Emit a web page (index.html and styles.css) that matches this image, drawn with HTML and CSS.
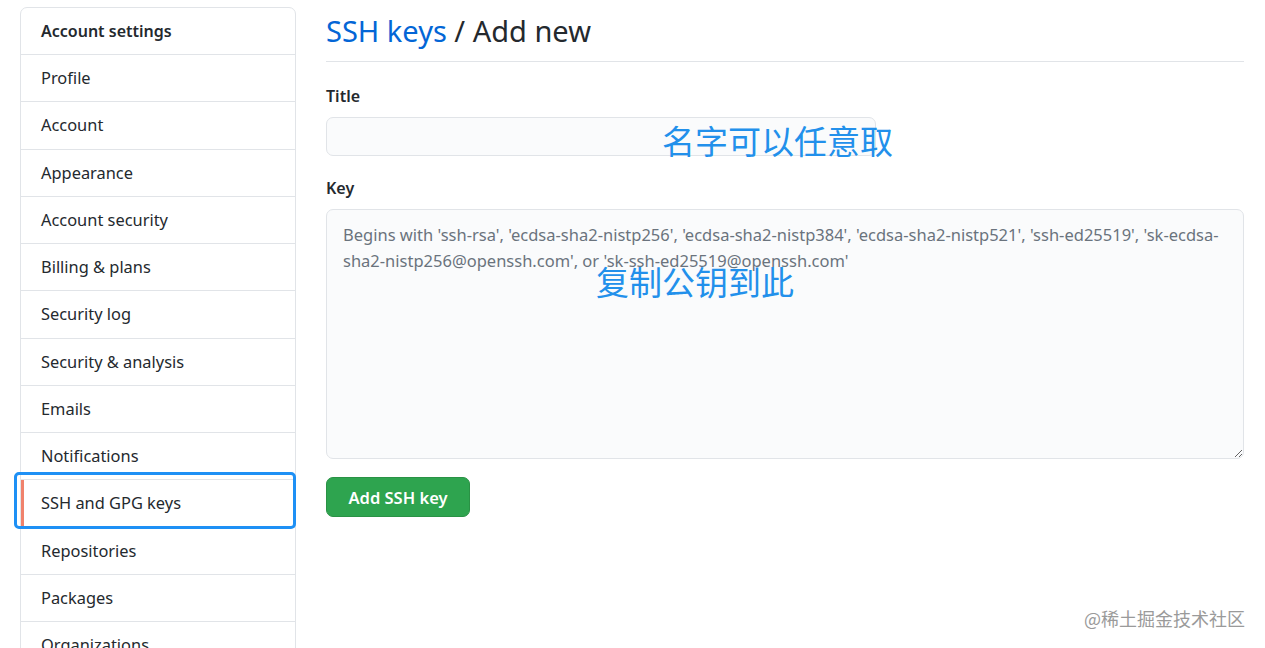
FILE: index.html
```html
<!DOCTYPE html>
<html lang="zh-CN">
<head>
<meta charset="utf-8">
<title>SSH keys / Add new</title>
<link rel="stylesheet" href="styles.css">
</head>
<body>
<div class="page">
  <nav class="menu">
    <div class="menu-heading">Account settings</div>
    <a class="menu-item">Profile</a>
    <a class="menu-item">Account</a>
    <a class="menu-item">Appearance</a>
    <a class="menu-item">Account security</a>
    <a class="menu-item">Billing &amp; plans</a>
    <a class="menu-item">Security log</a>
    <a class="menu-item">Security &amp; analysis</a>
    <a class="menu-item">Emails</a>
    <a class="menu-item">Notifications</a>
    <a class="menu-item selected">SSH and GPG keys<span class="mark-box"></span></a>
    <a class="menu-item">Repositories</a>
    <a class="menu-item">Packages</a>
    <a class="menu-item">Organizations</a>
  </nav>
  <main class="main">
    <h2 class="subhead"><a class="crumb">SSH keys</a> / Add new</h2>
    <form class="form">
      <div class="field">
        <label class="label">Title</label>
        <div class="title-wrap">
          <input class="input" type="text">
          <span class="note note-title">名字可以任意取</span>
        </div>
      </div>
      <div class="field">
        <label class="label">Key</label>
        <div class="key-wrap">
          <textarea class="textarea" placeholder="Begins with 'ssh-rsa', 'ecdsa-sha2-nistp256', 'ecdsa-sha2-nistp384', 'ecdsa-sha2-nistp521', 'ssh-ed25519', 'sk-ecdsa-sha2-nistp256@openssh.com', or 'sk-ssh-ed25519@openssh.com'"></textarea>
          <span class="note note-key">复制公钥到此</span>
        </div>
      </div>
      <button class="btn" type="button">Add SSH key</button>
    </form>
  </main>
</div>
<div class="watermark">@稀土掘金技术社区</div>
</body>
</html>
```
FILE: styles.css
```css
html, body {
  margin: 0;
  padding: 0;
  background: #ffffff;
  height: 648px;
  overflow: hidden;
}
body {
  font-family: "Noto Sans", "Open Sans", "Noto Sans CJK SC", sans-serif;
  color: #24292e;
  position: relative;
}
.page {
  display: flex;
  align-items: flex-start;
  gap: 30px;
  padding: 7px 0 0 20px;
}
.menu {
  width: 276px;
  flex: none;
  border: 1px solid #e1e4e8;
  border-radius: 7px;
  box-sizing: border-box;
  display: flex;
  flex-direction: column;
}
.menu-heading {
  height: 46px;
  line-height: 46px;
  padding-left: 20px;
  font-weight: 600;
  font-size: 16px;
  border-bottom: 1px solid #e1e4e8;
}
.menu-item {
  position: relative;
  height: 46.25px;
  line-height: 46px;
  padding-left: 20px;
  font-size: 16.4px;
  color: #24292e;
  border-bottom: 1px solid #e1e4e8;
}
.menu-item:last-child { border-bottom: none; }
.menu-item.selected {
  border-left: 3px solid #f0826c;
  padding-left: 17px;
}
.mark-box {
  position: absolute;
  left: -10px;
  top: -8px;
  width: 276px;
  height: 51px;
  border: 3px solid #1e90f5;
  border-radius: 5px;
}
.main {
  width: 918px;
  flex: none;
}
.subhead {
  margin: 0;
  font-weight: 400;
  font-size: 29px;
  line-height: 40px;
  padding: 4px 0 10px;
  border-bottom: 1px solid #e1e4e8;
  color: #24292e;
}
.crumb { color: #0366d6; }
.form {
  display: flex;
  flex-direction: column;
  align-items: flex-start;
  padding-top: 23px;
}
.field {
  display: flex;
  flex-direction: column;
  width: 100%;
  margin-bottom: 21px;
}
.field:last-of-type { margin-bottom: 18px; }
.label {
  font-weight: 600;
  font-size: 16px;
  line-height: 22px;
  margin-bottom: 10px;
}
.title-wrap, .key-wrap { position: relative; }
.input {
  display: block;
  box-sizing: border-box;
  width: 550px;
  height: 39px;
  border: 1px solid #e1e4e8;
  border-radius: 7px;
  background: #fafbfc;
  outline: none;
}
.textarea {
  display: block;
  box-sizing: border-box;
  width: 918px;
  height: 250px;
  border: 1px solid #e1e4e8;
  border-radius: 7px;
  background: #fafbfc;
  padding: 12px 8px 12px 16px;
  font-family: "Noto Sans", "Open Sans", sans-serif;
  font-size: 16.5px;
  line-height: 26px;
  outline: none;
  resize: vertical;
}
.textarea::placeholder { color: #6a737d; }
.note {
  position: absolute;
  color: #2290eb;
  font-family: "Noto Sans CJK SC", sans-serif;
  font-size: 33px;
  line-height: 1;
  white-space: nowrap;
}
.note-title { left: 336px; top: 7px; }
.note-key { left: 270px; top: 56px; font-size: 33px; }
.btn {
  height: 40px;
  width: 144px;
  border: 1px solid #2a9245;
  border-radius: 7px;
  background: #2ea44f;
  color: #ffffff;
  font-family: "Noto Sans", "Open Sans", sans-serif;
  font-weight: 600;
  font-size: 16.5px;
  padding: 0;
}
.watermark {
  position: absolute;
  right: 20px;
  top: 605px;
  font-family: "Noto Sans CJK SC", sans-serif;
  font-size: 18px;
  color: #9a9a9a;
}
```
